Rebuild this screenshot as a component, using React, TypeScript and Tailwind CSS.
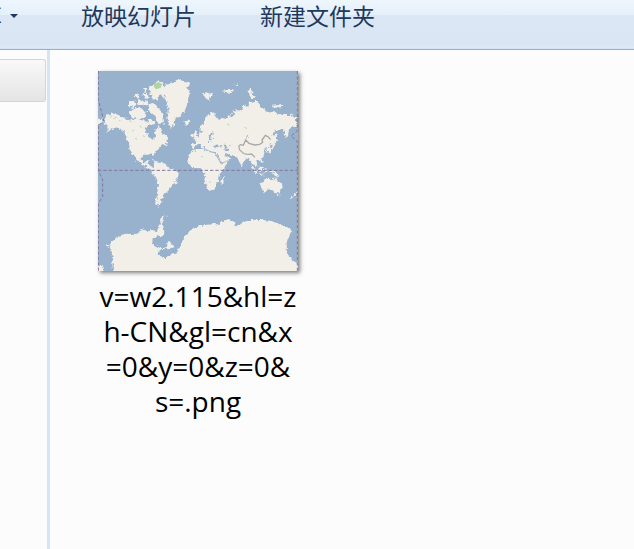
const FILE_NAME_LINES = ["v=w2.115&hl=z", "h-CN&gl=cn&x", "=0&y=0&z=0&", "s=.png"];

const TOOLBAR_ACTIONS = ["放映幻灯片", "新建文件夹"];

const WorldMap = () => (
  <svg viewBox="0 0 600 600" role="img" aria-label="World map" className="block h-auto w-full bg-[#98b2ce]">
    <defs>
      <filter id="coast" x="-5%" y="-5%" width="110%" height="110%">
        <feTurbulence type="fractalNoise" baseFrequency="0.09" numOctaves="3" seed="4" result="noise" />
        <feDisplacementMap in="SourceGraphic" in2="noise" scale="16" xChannelSelector="R" yChannelSelector="G" />
      </filter>
    </defs>

    <g fill="#f2efe9" filter="url(#coast)">
      {/* North America, Arctic islands, Greenland */}
      <g transform="translate(-24 -33)">
        <path d="M43 180 50 165 62 160 80 163 98 172 115 178 130 180 145 176 160 182 172 186 176 175 184 180 180 192 168 203 165 217 176 226 182 235 189 240 192 228 197 222 193 210 198 200 212 205 218 218 230 228 236 237 226 243 233 252 215 258 205 268 197 275 190 288 185 280 172 284 160 284 154 295 157 307 168 308 172 300 179 302 174 315 186 322 202 329 190 332 174 324 158 314 145 306 137 292 126 278 119 268 116 248 108 228 101 214 88 204 72 202 62 210 48 219 57 207 50 201 46 192Z" />
        <path d="M24 175 35 178 42 186 35 190 24 189Z" />
        <path d="M175 90 188 73 202 64 216 67 220 78 209 90 215 98 203 112 206 124 196 118 184 119 188 104 178 100Z" />
        <path d="M176 132 192 128 203 142 213 154 221 174 222 190 210 192 199 184 197 168 184 159 172 148Z" />
        <path d="M116 158 128 146 144 142 160 147 170 160 160 174 140 178 124 170Z" />
        <path d="M118 128 132 120 140 132 130 144 116 140ZM143 121 156 118 160 134 145 136ZM155 103 168 98 178 110 166 118ZM162 120 175 123 172 140 160 134ZM133 106 146 102 151 112 138 119ZM181 180 194 184 189 197 178 191ZM159 85 172 83 167 96Z" />
        <path d="M207 90 215 80 230 76 237 68 251 71 258 60 275 58 281 66 299 68 292 83 300 93 292 111 291 134 285 153 272 168 258 174 250 189 245 204 236 191 232 172 237 150 230 128 222 108 210 103Z" />
        <path d="M282 185 291 181 300 187 293 194 285 192Z" />
        <path d="M178 296 192 299 204 306 196 307 185 300Z" />
      </g>

      {/* Europe and Asia */}
      <g transform="translate(291 -33)">
        <path d="M18 214 15 202 24 190 31 176 43 163 55 160 64 169 72 180 82 174 94 177 108 171 119 168 120 154 127 145 133 155 141 150 145 139 160 136 168 125 182 122 194 129 195 141 209 148 221 158 235 155 249 161 264 165 285 165 306 171 306 199 295 202 283 206 280 220 272 235 266 222 269 210 256 208 240 211 233 221 243 229 247 243 237 253 226 252 222 262 228 276 221 278 215 265 204 267 209 280 205 292 195 300 183 301 187 314 182 325 177 315 170 311 166 302 156 292 146 302 140 319 132 304 126 292 106 287 94 281 88 286 104 294 105 304 86 315 76 303 66 284 62 276 48 274 35 271 29 262 23 255 29 271 22 268 13 253 3 253-4 265-12 265-10 249 4 246-5 236 7 231 14 224Z" />
        <path d="M91 190 98 168 114 157 125 149 124 155 107 164 99 180 103 192Z" />
        <path d="M25 98 38 101 48 96 57 103 48 107 44 119 37 122 32 111 25 108ZM83 93 101 89 118 92 106 99 96 96ZM118 74 131 70 128 77ZM158 90 168 88 176 106 184 116 171 116 161 103ZM231 135 252 132 263 140 247 144 233 141Z" />
      </g>

      {/* Africa, Oceania and the islands off both coasts */}
      <g transform="translate(246 117)">
        <path d="M33 127 48 120 66 117 78 123 91 127 104 130 113 147 123 163 137 166 130 180 119 192 117 210 108 224 100 239 85 243 79 229 73 210 75 194 68 180 55 175 40 174 29 164 22 151 28 139Z" />
        <path d="M121 220 125 205 132 201 130 218 125 225ZM38 90 44 82 41 70 46 58 51 63 49 72 55 83 48 89ZM34 82 36 72 42 72 40 82Z" />
        <path d="M243 235 242 219 258 211 266 203 278 204 284 213 288 200 294 212 304 226 306 238 299 250 287 250 278 241 262 239 250 245ZM290 254 299 254 295 261ZM329 269 337 258 342 257 334 269ZM340 255 345 245 349 249 344 258Z" />
        <path d="M211 165 219 169 231 187 225 187ZM231 190 245 192 256 196 240 195ZM234 177 244 167 251 171 246 185 237 185ZM253 178 260 174 257 186 252 188ZM270 181 282 184 299 198 285 196 275 190ZM239 142 245 146 248 161 242 155ZM185 165 189 168 186 171Z" />
        <path d="M257 119 266 116 276 111 281 99 286 103 281 116 269 123 259 128ZM280 91 291 94 284 99ZM285 69 291 75 287 88 283 80Z" />
      </g>

      {/* South America and Antarctica */}
      <g transform="translate(-24 282)">
        <path d="M192 3 198-8 212-10 226-4 238 8 253 17 267 25 263 37 256 52 244 65 234 78 222 89 216 99 211 109 213 121 207 126 199 115 200 96 203 75 204 52 194 35 188 23Z" />
        <path d="M70 330 67 292 71 275 61 259 59 240 69 223 86 213 109 206 130 207 148 202 154 191 165 199 186 195 201 199 205 187 213 177 209 164 218 154 230 150 218 164 220 184 223 202 214 217 207 211 188 222 187 235 200 245 213 250 228 246 236 230 245 232 250 245 240 253 221 251 204 261 208 273 230 277 248 268 265 263 264 250 276 240 276 226 291 211 303 193 320 187 338 181 365 178 385 178 407 165 425 168 435 171 438 187 453 174 478 165 515 164 545 168 567 177 598 189 607 198 596 210 590 235 591 262 602 282 634 300 634 330Z" />
        <path d="M14 298 39 304 48 330 14 330ZM48 240 56 237 59 244 51 246Z" />
      </g>
    </g>

    {/* Inland waters */}
    <g fill="#98b2ce" filter="url(#coast)">
      <path d="M334 196 342 178 344 188 339 204 350 205 341 211 329 209ZM345 227 358 219 371 228 357 232ZM376 221 384 221 389 237 382 241ZM396 223 400 221 400 228ZM444 200 451 192 449 200Z" />
      <path d="M149 192 156 194 163 193 162 198 154 201Z" />
    </g>

    {/* Parks and woodland */}
    <path d="M168 39 181 33 192 39 188 50 174 55 168 49Z" fill="#b1d5a1" />
    <g fill="none" stroke="#b5ceb0" strokeWidth="3">
      <path d="M36 139 42 134M47 143 55 139M63 151 67 147M95 150 100 152M103 180 108 177M126 164 130 170M112 202 117 205M135 194 140 197M334 335 339 331M508 354 516 356M310 257 315 257M440 169 446 172M388 159 394 162" />
    </g>

    {/* Land and sea borders */}
    <path d="M422 225 428 221 436 223 443 207 453 217 470 222 485 220 494 214 492 207 502 193 511 198 518 206" fill="none" stroke="#aaa8a4" strokeWidth="4" />
    <path d="M422 225 425 237 438 248 448 250 461 249 471 259" fill="none" stroke="#b0aeaa" strokeWidth="4" />
    <path d="M354 252 364 269 374 276 391 268" fill="none" stroke="#aebbc5" strokeWidth="3" />
    <g fill="none" stroke="#85759c" strokeWidth="3" strokeDasharray="10 6">
      <path d="M0 298H600M1 0V86L18 152 1 162V300L14 327V377L1 397V600M598 0V180L579 195 598 211V600" />
    </g>
  </svg>
);

export default function App() {
  return (
    <div className="flex min-h-screen flex-col bg-[#fcfcfc] font-['Open_Sans','Noto_Sans_CJK_SC',sans-serif]">
      {/* Toolbar */}
      <header className="flex h-[50px] shrink-0 items-start border-b border-[#a0afc3] bg-[linear-gradient(#eef6fd_0px,#e5f0fa_15px,#dce6f4_15px,#dae6f4_45px,#dfeaf7_48px,#c9daef_49px)] text-[23px] leading-8 text-[#1e395b]">
        <button className="flex h-8 w-5 shrink-0 items-center justify-end overflow-hidden whitespace-nowrap">
          共享
          <svg viewBox="0 0 8 4" className="mr-0.5 ml-2 h-1 w-2 shrink-0 fill-current" aria-hidden="true">
            <path d="M0 0H8L4 4Z" />
          </svg>
        </button>
        <div className="ml-[61px] flex gap-16">
          {TOOLBAR_ACTIONS.map((action) => (
            <button key={action} className="whitespace-nowrap">{action}</button>
          ))}
        </div>
      </header>

      <div className="flex flex-1">
        {/* Navigation pane */}
        <aside className="w-[50px] shrink-0 border-r-3 border-[#d6e4f5] pt-[9px] pr-px">
          <button
            aria-label="收藏夹"
            className="block h-[43px] w-full rounded-r-[3px] border border-l-0 border-[#d5d5d5] bg-linear-to-b from-[#f9f9f9] to-[#e4e4e4]"
          />
        </aside>

        {/* Files */}
        <main className="flex-1 px-12 pt-[21px]">
          <figure className="w-[200px]">
            <div className="shadow-[2px_2px_4px_rgba(0,0,0,0.5)]">
              <WorldMap />
            </div>
            <figcaption className="mt-2 text-center text-[28px] leading-[35px] text-black">
              {FILE_NAME_LINES.map((line) => (
                <span key={line} className="block whitespace-nowrap">{line}</span>
              ))}
            </figcaption>
          </figure>
        </main>
      </div>
    </div>
  );
}
